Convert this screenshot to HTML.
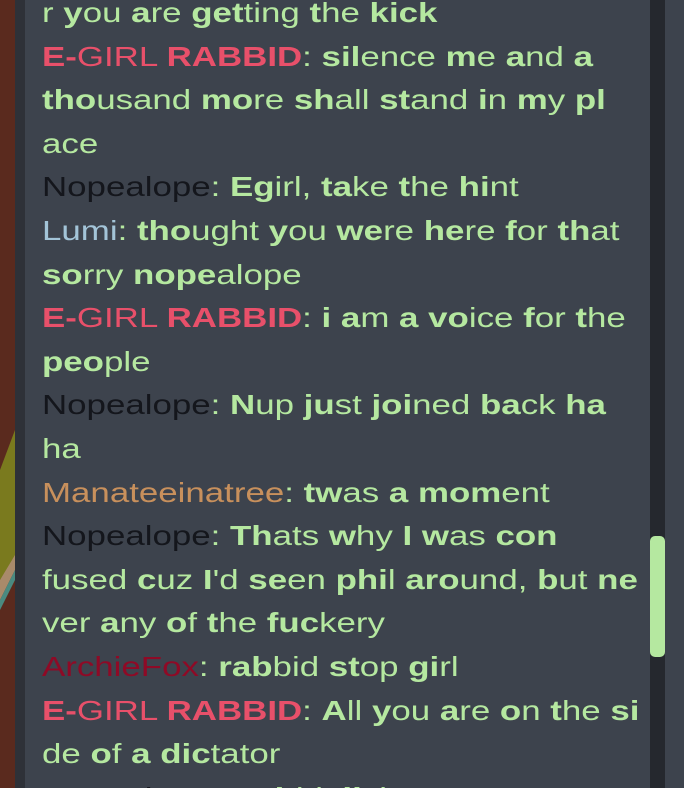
<!DOCTYPE html>
<html><head><meta charset="utf-8"><style>
html,body{margin:0;padding:0;width:684px;height:788px;overflow:hidden;background:#3d434d;position:relative;}
.bg{position:absolute;left:0;top:0;width:15px;height:788px;background:#5a2a1e;}
.bg2{position:absolute;left:15px;top:0;width:10px;height:788px;background:#2e3138;}
.chat{position:absolute;left:42px;top:-9px;font-family:"Liberation Sans",Arial,sans-serif;font-size:28px;line-height:43.6px;color:#b5e8a0;white-space:nowrap;transform:scaleX(1.245);transform-origin:0 0;}
.chat div{height:43.6px;}
b{font-weight:bold;}
.r{color:#e8506a}.n{color:#14161c}.l{color:#a3c4d8}.m{color:#c8905c}.a{color:#8e0a26}
.track{position:absolute;left:650px;top:0;width:15px;height:788px;background:#25282e;}
.thumb{position:absolute;left:650px;top:536px;width:15px;height:121px;background:#b5e8a0;border-radius:5px;}
</style></head><body>
<div class="bg"></div><div class="bg2"></div>
<svg style="position:absolute;left:0;top:430px" width="15" height="220"><polygon points="0,40 15,0 15,130 0,150" fill="#7a7a1e"/><polygon points="0,150 15,125 15,140 0,170" fill="#a98a6a"/><polygon points="0,170 15,140 15,150 0,180" fill="#4a8a80"/></svg>
<div class="chat">
<div>r <b>y</b>ou <b>a</b>re <b>get</b>ting <b>t</b>he <b>kick</b></div>
<div><span class="r"><b>E-</b>GIRL <b>RABBID</b></span>: <b>sil</b>ence <b>m</b>e <b>a</b>nd <b>a</b></div>
<div><b>tho</b>usand <b>mo</b>re <b>sh</b>all <b>st</b>and <b>i</b>n <b>m</b>y <b>pl</b></div>
<div>ace</div>
<div><span class="n">Nopealope</span>: <b>Eg</b>irl, <b>ta</b>ke <b>t</b>he <b>hi</b>nt</div>
<div><span class="l">Lumi</span>: <b>tho</b>ught <b>y</b>ou <b>we</b>re <b>he</b>re <b>f</b>or <b>th</b>at</div>
<div><b>so</b>rry <b>nope</b>alope</div>
<div><span class="r"><b>E-</b>GIRL <b>RABBID</b></span>: <b>i</b> <b>a</b>m <b>a</b> <b>vo</b>ice <b>f</b>or <b>t</b>he</div>
<div><b>peo</b>ple</div>
<div><span class="n">Nopealope</span>: <b>N</b>up <b>ju</b>st <b>joi</b>ned <b>ba</b>ck <b>ha</b></div>
<div>ha</div>
<div><span class="m">Manateeinatree</span>: <b>tw</b>as <b>a</b> <b>mom</b>ent</div>
<div><span class="n">Nopealope</span>: <b>Th</b>ats <b>w</b>hy <b>I</b> <b>w</b>as <b>con</b></div>
<div>fused <b>c</b>uz <b>I</b>'d <b>se</b>en <b>phi</b>l <b>aro</b>und, <b>b</b>ut <b>ne</b></div>
<div>ver <b>a</b>ny <b>o</b>f <b>t</b>he <b>fuc</b>kery</div>
<div><span class="a">ArchieFox</span>: <b>rab</b>bid <b>st</b>op <b>gi</b>rl</div>
<div><span class="r"><b>E-</b>GIRL <b>RABBID</b></span>: <b>A</b>ll <b>y</b>ou <b>a</b>re <b>o</b>n <b>t</b>he <b>si</b></div>
<div>de <b>o</b>f <b>a</b> <b>dic</b>tator</div>
<div><span class="n">Nopealope</span>: <b>Rab</b>bit <b>li</b>ving <b>r</b>ent</div>
</div>
<div class="track"></div><div class="thumb"></div>
</body></html>
